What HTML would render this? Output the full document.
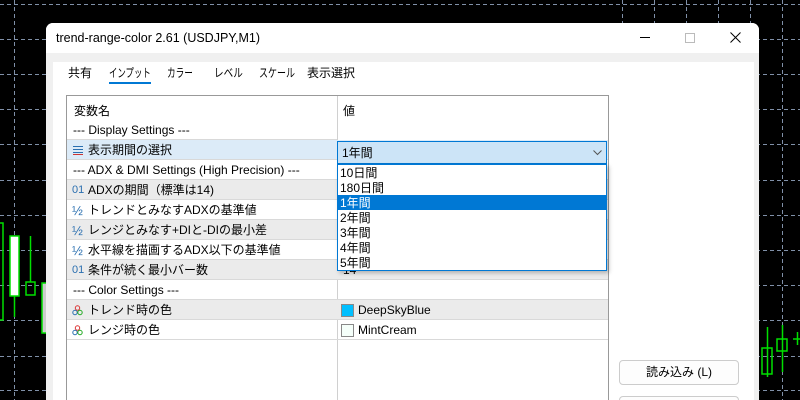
<!DOCTYPE html>
<html><head><meta charset="utf-8"><style>
html,body{margin:0;width:800px;height:400px;overflow:hidden}
body{background:#000;position:relative;font-family:"Liberation Sans","Noto Sans CJK JP",sans-serif;font-size:12px;color:#000}
.a{position:absolute}
.win{left:46px;top:23px;width:713px;height:377px;background:#f0f0f0;border-radius:7px 7px 0 0;overflow:hidden}
.tb{left:0;top:0;width:713px;height:30px;background:#fff}
.row{position:absolute;left:67px;width:541px;height:20px;border-bottom:1px solid #d9d9d9;box-sizing:border-box;line-height:21px}
.g{background:#ebebeb}
.row span{position:absolute;left:6px}
.row .ic{left:5px;color:#2a6fb0;font-size:11px}
.row .t{left:21px}
.li{position:absolute;left:2px;height:15px;line-height:16px;width:266px;font-size:12px}
.tab{position:absolute;top:64px;transform-origin:0 0;white-space:nowrap}
</style></head><body>
<svg class="a" style="left:0;top:0" width="800" height="400">
<g stroke="#8090a8" stroke-dasharray="4,3" stroke-width="1">
<line x1="14.5" y1="0" x2="14.5" y2="400"/><line x1="622.5" y1="0" x2="622.5" y2="400"/><line x1="654.5" y1="0" x2="654.5" y2="400"/><line x1="686.5" y1="0" x2="686.5" y2="400"/><line x1="718.5" y1="0" x2="718.5" y2="400"/><line x1="750.5" y1="0" x2="750.5" y2="400"/><line x1="782.5" y1="0" x2="782.5" y2="400"/>
<line x1="0" y1="4.5" x2="800" y2="4.5"/><line x1="0" y1="39.5" x2="800" y2="39.5"/><line x1="0" y1="74.5" x2="800" y2="74.5"/><line x1="0" y1="109.5" x2="800" y2="109.5"/><line x1="0" y1="144.5" x2="800" y2="144.5"/><line x1="0" y1="180.5" x2="800" y2="180.5"/><line x1="0" y1="215.5" x2="800" y2="215.5"/><line x1="0" y1="250.5" x2="800" y2="250.5"/><line x1="0" y1="285.5" x2="800" y2="285.5"/><line x1="0" y1="320.5" x2="800" y2="320.5"/><line x1="0" y1="356.5" x2="800" y2="356.5"/><line x1="0" y1="390.5" x2="800" y2="390.5"/>
</g>
<g stroke="#00e000" stroke-width="1.5" fill="none">
<rect x="-2" y="223" width="5" height="97"/>
<rect x="10" y="236" width="9" height="60" fill="#fff"/><line x1="14.5" y1="296" x2="14.5" y2="317"/>
<line x1="30.5" y1="236" x2="30.5" y2="282"/><rect x="26" y="282" width="9" height="13"/>
<rect x="42" y="283" width="6" height="50" fill="#ccc"/>
<line x1="767.5" y1="327" x2="767.5" y2="377"/><rect x="762" y="348" width="10" height="26"/>
<line x1="782.5" y1="325" x2="782.5" y2="372"/><rect x="777" y="339" width="10" height="12"/>
<line x1="793" y1="339" x2="800" y2="339"/><line x1="797.5" y1="332" x2="797.5" y2="345"/>
</g></svg>
<div class="a win">
<div class="a tb"></div>
<div class="a" style="left:10px;top:8px;font-size:12.5px">trend-range-color 2.61 (USDJPY,M1)</div>
<div class="a" style="left:594px;top:14px;width:10px;height:1px;background:#000"></div>
<div class="a" style="left:639px;top:10px;width:8px;height:8px;border:1px solid #bbb"></div>
<svg class="a" style="left:684px;top:9px" width="11" height="11"><path d="M0.5 0.5L10.5 10.5M10.5 0.5L0.5 10.5" stroke="#000"/></svg>
<div class="a" style="left:7px;top:39px;width:701px;height:338px;background:#fff"></div>
</div>
<div class="tab" style="left:68px">共有</div>
<div class="tab" style="left:109px;transform:scaleX(0.7)">インプット</div>
<div class="a" style="left:109px;top:82px;width:42px;height:2px;background:#0078d4"></div>
<div class="tab" style="left:167px;transform:scaleX(0.72)">カラー</div>
<div class="tab" style="left:214px;transform:scaleX(0.8)">レベル</div>
<div class="tab" style="left:259px;transform:scaleX(0.75)">スケール</div>
<div class="tab" style="left:307px">表示選択</div>
<div class="a" style="left:66px;top:95px;width:541px;height:305px;border:1px solid #999;border-bottom:0;background:#fff"></div>
<div class="a" style="left:337px;top:96px;width:1px;height:304px;background:#d0d0d0"></div>
<div class="a" style="left:74px;top:102px">変数名</div>
<div class="a" style="left:343px;top:102px">値</div>
<div class="row" style="top:120px;width:270px"><span>--- Display Settings ---</span></div>
<div class="row" style="top:140px;background:#dcebf8"><svg class="a" style="left:5px;top:5px" width="12" height="10"><path d="M1 1.5H11M1 4.5H11M1 7.5H11" stroke="#2a6fb0"/><path d="M1 9.5H11" stroke="#c33"/></svg><span class="t">表示期間の選択</span></div>
<div class="row" style="top:160px"><span>--- ADX &amp; DMI Settings (High Precision) ---</span></div>
<div class="row g" style="top:180px"><span class="ic">01</span><span class="t">ADXの期間（標準は14)</span></div>
<div class="row" style="top:200px"><span class="ic" style="font-size:13px">½</span><span class="t">トレンドとみなすADXの基準値</span></div>
<div class="row g" style="top:220px"><span class="ic" style="font-size:13px">½</span><span class="t">レンジとみなす+DIと-DIの最小差</span></div>
<div class="row" style="top:240px"><span class="ic" style="font-size:13px">½</span><span class="t">水平線を描画するADX以下の基準値</span></div>
<div class="row g" style="top:260px"><span class="ic">01</span><span class="t">条件が続く最小バー数</span><span style="left:276px">14</span></div>
<div class="row" style="top:280px"><span>--- Color Settings ---</span></div>
<div class="row g" style="top:300px"><svg class="a" style="left:5px;top:5px" width="11" height="11"><circle cx="5.5" cy="3" r="2.2" fill="none" stroke="#d33"/><circle cx="3" cy="7.5" r="2.2" fill="none" stroke="#2a6fb0"/><circle cx="8" cy="7.5" r="2.2" fill="none" stroke="#2a2"/></svg><span class="t">トレンド時の色</span><span style="left:274px;top:4px;width:11px;height:11px;background:#00bfff;border:1px solid #888;line-height:0"></span><span style="left:291px">DeepSkyBlue</span></div>
<div class="row" style="top:320px"><svg class="a" style="left:5px;top:5px" width="11" height="11"><circle cx="5.5" cy="3" r="2.2" fill="none" stroke="#d33"/><circle cx="3" cy="7.5" r="2.2" fill="none" stroke="#2a6fb0"/><circle cx="8" cy="7.5" r="2.2" fill="none" stroke="#2a2"/></svg><span class="t">レンジ時の色</span><span style="left:274px;top:4px;width:11px;height:11px;background:#f5fffa;border:1px solid #888;line-height:0"></span><span style="left:291px">MintCream</span></div>
<div class="a" style="left:337px;top:141px;width:268px;height:21px;background:#cce4f7;border:1px solid #0078d4;line-height:22px"><span style="margin-left:4px">1年間</span><svg class="a" style="left:255px;top:8px" width="9" height="6"><path d="M0.5 0.5L4.5 4.5L8.5 0.5" stroke="#555" fill="none"/></svg></div>
<div class="a" style="left:337px;top:164px;width:268px;height:105px;background:#fff;border:1px solid #0078d4;box-shadow:2px 2px 4px rgba(0,0,0,.25)">
<div class="li" style="top:0">10日間</div><div class="li" style="top:15px">180日間</div>
<div class="li" style="top:30px;left:0;width:268px;padding-left:2px;box-sizing:border-box;background:#0078d4;color:#fff">1年間</div>
<div class="li" style="top:45px">2年間</div><div class="li" style="top:60px">3年間</div><div class="li" style="top:75px">4年間</div><div class="li" style="top:90px">5年間</div></div>
<div class="a" style="left:619px;top:360px;width:118px;height:23px;border:1px solid #ccc;border-radius:4px;background:#fdfdfd;text-align:center;line-height:23px">読み込み (L)</div>
<div class="a" style="left:619px;top:396px;width:118px;height:3px;border:1px solid #ccc;border-bottom:0;border-radius:4px 4px 0 0;background:#fdfdfd"></div>
</body></html>
